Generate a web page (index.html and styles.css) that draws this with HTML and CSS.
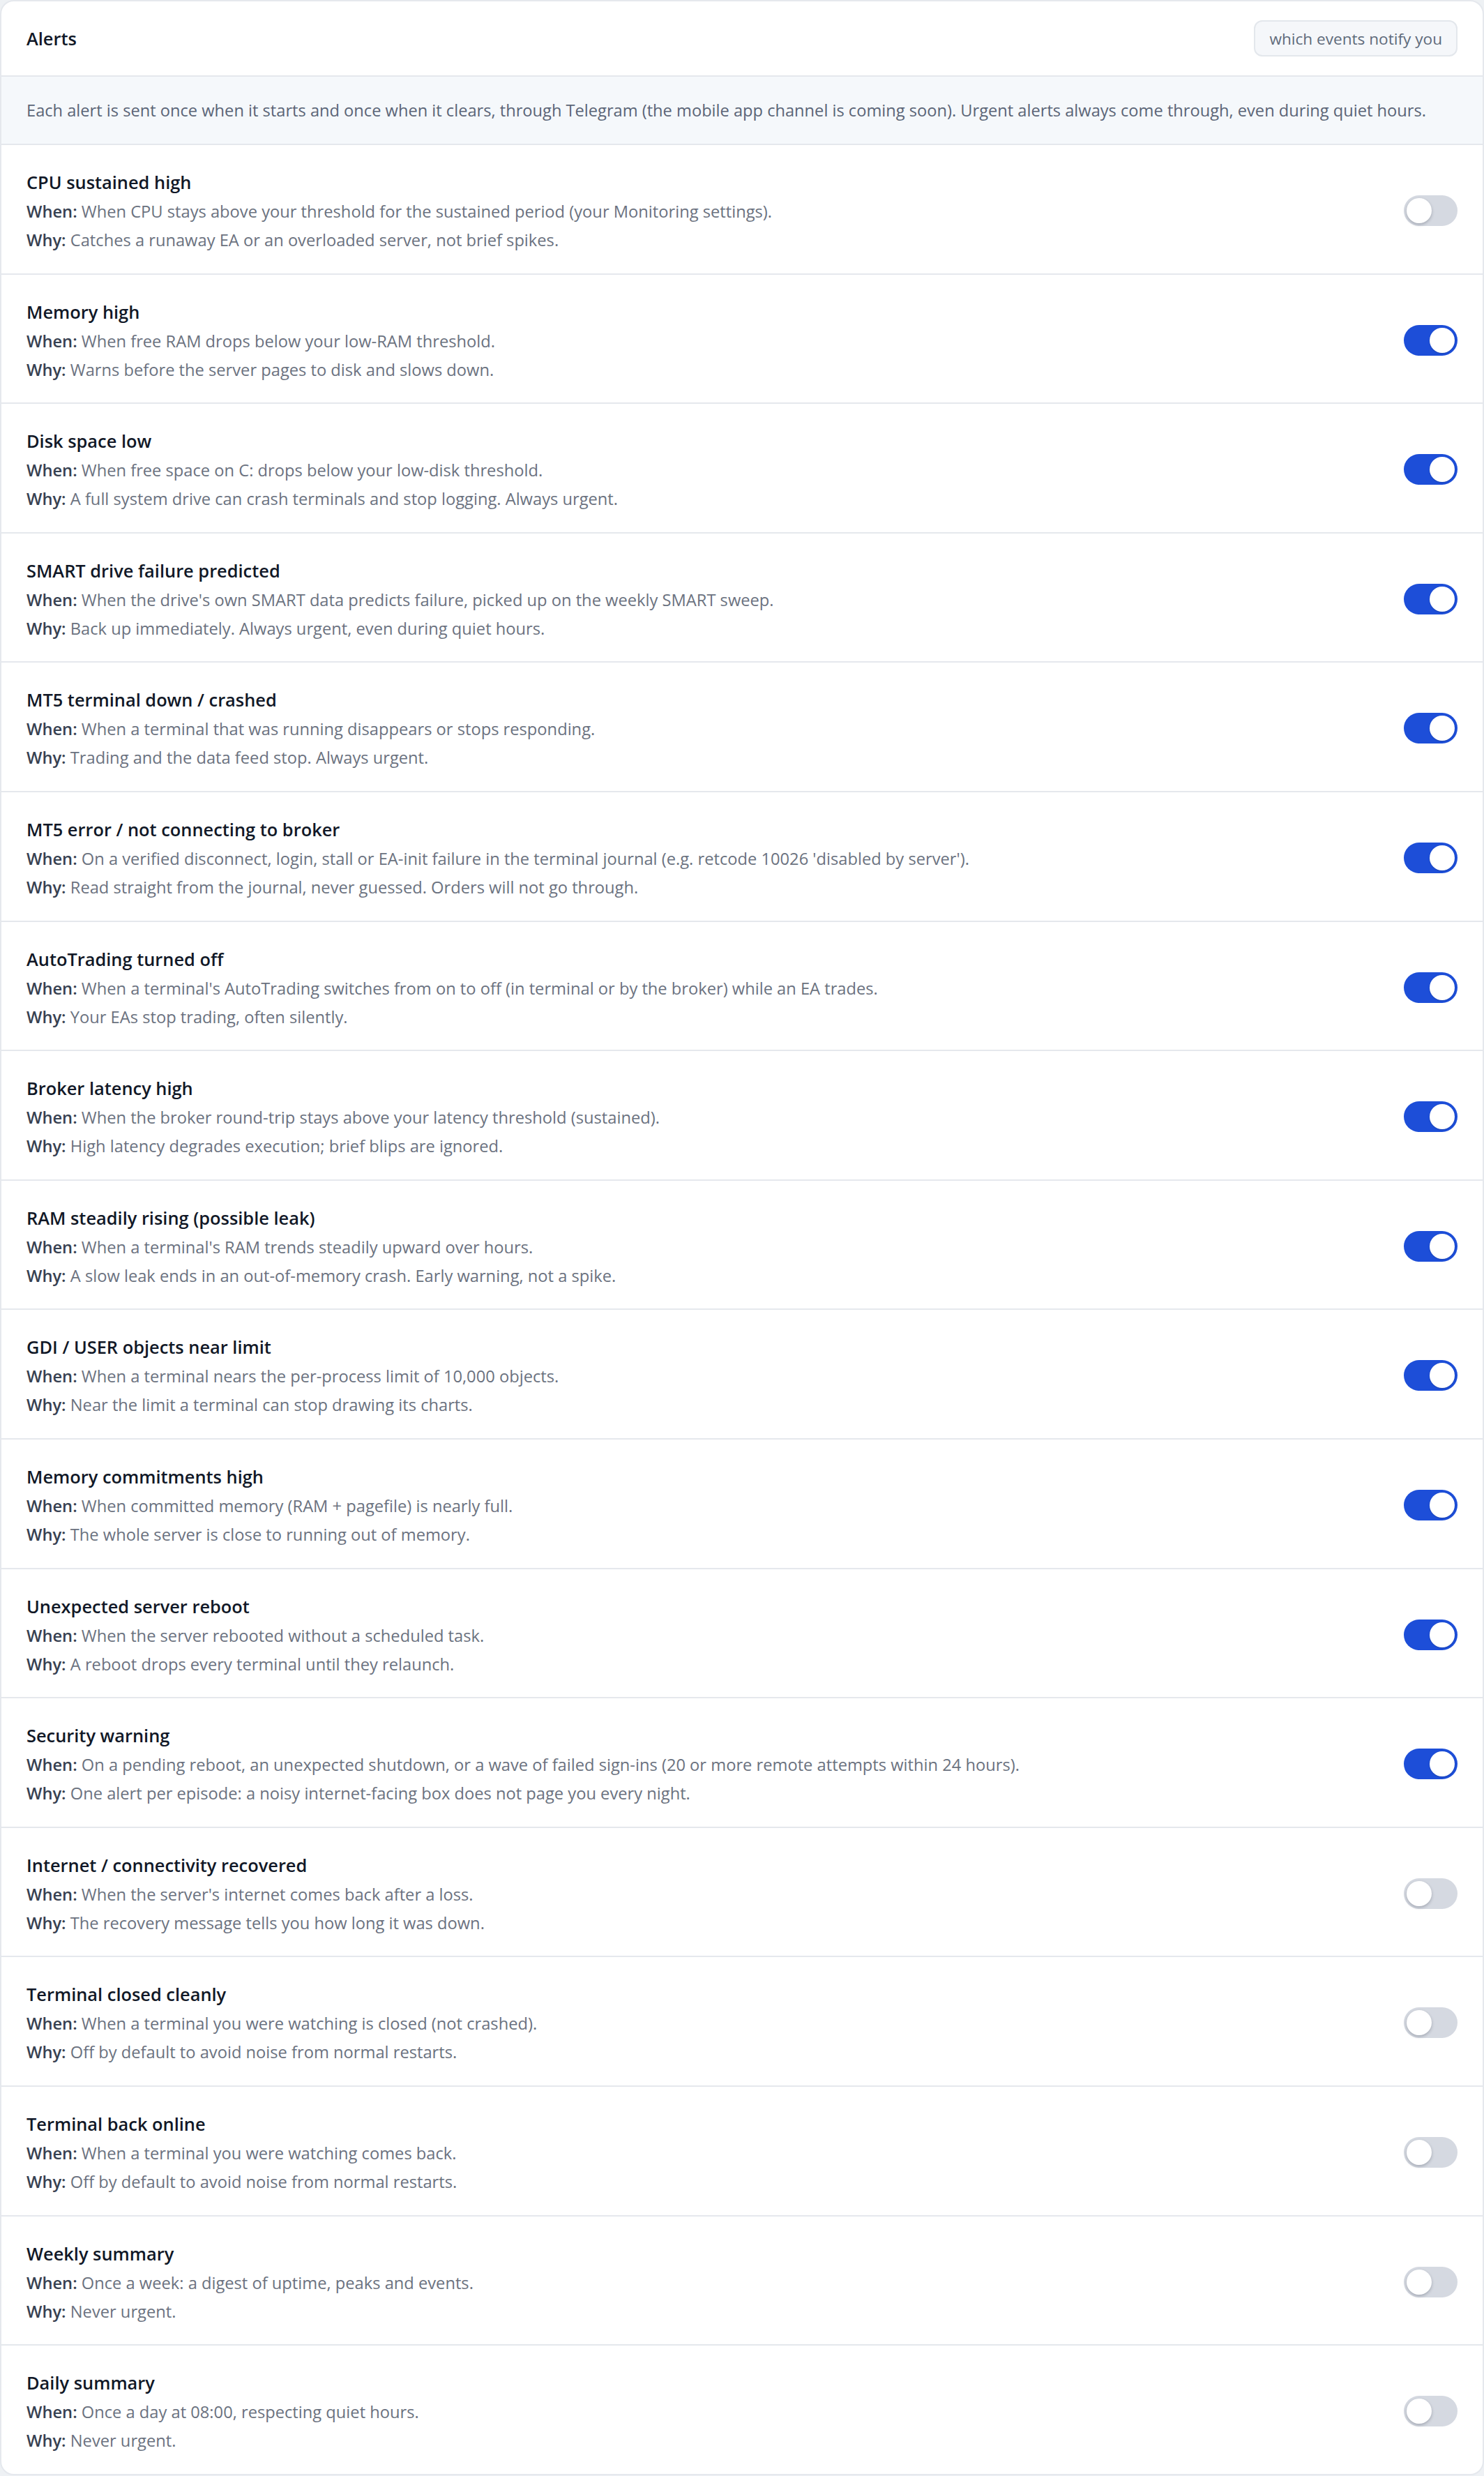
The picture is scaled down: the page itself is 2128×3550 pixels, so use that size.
FILE: index.html
```html
<!DOCTYPE html>
<html lang="en">
<head>
<meta charset="utf-8">
<title>Alerts</title>
<link rel="stylesheet" href="styles.css">
</head>
<body>
<section class="card">
  <header class="card-header">
    <h2 class="card-title">Alerts</h2>
    <span class="badge">which events notify you</span>
  </header>
  <p class="info">Each alert is sent once when it starts and once when it clears, through Telegram (the mobile app channel is coming soon). Urgent alerts always come through, even during quiet hours.</p>
  <ul class="alert-list">
    <li class="alert-row">
      <div class="alert-text">
        <h3 class="alert-name">CPU sustained high</h3>
        <p class="alert-line"><b>When:</b> When CPU stays above your threshold for the sustained period (your Monitoring settings).</p>
        <p class="alert-line"><b>Why:</b> Catches a runaway EA or an overloaded server, not brief spikes.</p>
      </div>
      <button class="switch" role="switch" aria-checked="false"><span class="knob"></span></button>
    </li>
    <li class="alert-row">
      <div class="alert-text">
        <h3 class="alert-name">Memory high</h3>
        <p class="alert-line"><b>When:</b> When free RAM drops below your low-RAM threshold.</p>
        <p class="alert-line"><b>Why:</b> Warns before the server pages to disk and slows down.</p>
      </div>
      <button class="switch is-on" role="switch" aria-checked="true"><span class="knob"></span></button>
    </li>
    <li class="alert-row">
      <div class="alert-text">
        <h3 class="alert-name">Disk space low</h3>
        <p class="alert-line"><b>When:</b> When free space on C: drops below your low-disk threshold.</p>
        <p class="alert-line"><b>Why:</b> A full system drive can crash terminals and stop logging. Always urgent.</p>
      </div>
      <button class="switch is-on" role="switch" aria-checked="true"><span class="knob"></span></button>
    </li>
    <li class="alert-row">
      <div class="alert-text">
        <h3 class="alert-name">SMART drive failure predicted</h3>
        <p class="alert-line"><b>When:</b> When the drive's own SMART data predicts failure, picked up on the weekly SMART sweep.</p>
        <p class="alert-line"><b>Why:</b> Back up immediately. Always urgent, even during quiet hours.</p>
      </div>
      <button class="switch is-on" role="switch" aria-checked="true"><span class="knob"></span></button>
    </li>
    <li class="alert-row">
      <div class="alert-text">
        <h3 class="alert-name">MT5 terminal down / crashed</h3>
        <p class="alert-line"><b>When:</b> When a terminal that was running disappears or stops responding.</p>
        <p class="alert-line"><b>Why:</b> Trading and the data feed stop. Always urgent.</p>
      </div>
      <button class="switch is-on" role="switch" aria-checked="true"><span class="knob"></span></button>
    </li>
    <li class="alert-row">
      <div class="alert-text">
        <h3 class="alert-name">MT5 error / not connecting to broker</h3>
        <p class="alert-line"><b>When:</b> On a verified disconnect, login, stall or EA-init failure in the terminal journal (e.g. retcode 10026 'disabled by server').</p>
        <p class="alert-line"><b>Why:</b> Read straight from the journal, never guessed. Orders will not go through.</p>
      </div>
      <button class="switch is-on" role="switch" aria-checked="true"><span class="knob"></span></button>
    </li>
    <li class="alert-row">
      <div class="alert-text">
        <h3 class="alert-name">AutoTrading turned off</h3>
        <p class="alert-line"><b>When:</b> When a terminal's AutoTrading switches from on to off (in terminal or by the broker) while an EA trades.</p>
        <p class="alert-line"><b>Why:</b> Your EAs stop trading, often silently.</p>
      </div>
      <button class="switch is-on" role="switch" aria-checked="true"><span class="knob"></span></button>
    </li>
    <li class="alert-row">
      <div class="alert-text">
        <h3 class="alert-name">Broker latency high</h3>
        <p class="alert-line"><b>When:</b> When the broker round-trip stays above your latency threshold (sustained).</p>
        <p class="alert-line"><b>Why:</b> High latency degrades execution; brief blips are ignored.</p>
      </div>
      <button class="switch is-on" role="switch" aria-checked="true"><span class="knob"></span></button>
    </li>
    <li class="alert-row">
      <div class="alert-text">
        <h3 class="alert-name">RAM steadily rising (possible leak)</h3>
        <p class="alert-line"><b>When:</b> When a terminal's RAM trends steadily upward over hours.</p>
        <p class="alert-line"><b>Why:</b> A slow leak ends in an out-of-memory crash. Early warning, not a spike.</p>
      </div>
      <button class="switch is-on" role="switch" aria-checked="true"><span class="knob"></span></button>
    </li>
    <li class="alert-row">
      <div class="alert-text">
        <h3 class="alert-name">GDI / USER objects near limit</h3>
        <p class="alert-line"><b>When:</b> When a terminal nears the per-process limit of 10,000 objects.</p>
        <p class="alert-line"><b>Why:</b> Near the limit a terminal can stop drawing its charts.</p>
      </div>
      <button class="switch is-on" role="switch" aria-checked="true"><span class="knob"></span></button>
    </li>
    <li class="alert-row">
      <div class="alert-text">
        <h3 class="alert-name">Memory commitments high</h3>
        <p class="alert-line"><b>When:</b> When committed memory (RAM + pagefile) is nearly full.</p>
        <p class="alert-line"><b>Why:</b> The whole server is close to running out of memory.</p>
      </div>
      <button class="switch is-on" role="switch" aria-checked="true"><span class="knob"></span></button>
    </li>
    <li class="alert-row">
      <div class="alert-text">
        <h3 class="alert-name">Unexpected server reboot</h3>
        <p class="alert-line"><b>When:</b> When the server rebooted without a scheduled task.</p>
        <p class="alert-line"><b>Why:</b> A reboot drops every terminal until they relaunch.</p>
      </div>
      <button class="switch is-on" role="switch" aria-checked="true"><span class="knob"></span></button>
    </li>
    <li class="alert-row">
      <div class="alert-text">
        <h3 class="alert-name">Security warning</h3>
        <p class="alert-line"><b>When:</b> On a pending reboot, an unexpected shutdown, or a wave of failed sign-ins (20 or more remote attempts within 24 hours).</p>
        <p class="alert-line"><b>Why:</b> One alert per episode: a noisy internet-facing box does not page you every night.</p>
      </div>
      <button class="switch is-on" role="switch" aria-checked="true"><span class="knob"></span></button>
    </li>
    <li class="alert-row">
      <div class="alert-text">
        <h3 class="alert-name">Internet / connectivity recovered</h3>
        <p class="alert-line"><b>When:</b> When the server's internet comes back after a loss.</p>
        <p class="alert-line"><b>Why:</b> The recovery message tells you how long it was down.</p>
      </div>
      <button class="switch" role="switch" aria-checked="false"><span class="knob"></span></button>
    </li>
    <li class="alert-row">
      <div class="alert-text">
        <h3 class="alert-name">Terminal closed cleanly</h3>
        <p class="alert-line"><b>When:</b> When a terminal you were watching is closed (not crashed).</p>
        <p class="alert-line"><b>Why:</b> Off by default to avoid noise from normal restarts.</p>
      </div>
      <button class="switch" role="switch" aria-checked="false"><span class="knob"></span></button>
    </li>
    <li class="alert-row">
      <div class="alert-text">
        <h3 class="alert-name">Terminal back online</h3>
        <p class="alert-line"><b>When:</b> When a terminal you were watching comes back.</p>
        <p class="alert-line"><b>Why:</b> Off by default to avoid noise from normal restarts.</p>
      </div>
      <button class="switch" role="switch" aria-checked="false"><span class="knob"></span></button>
    </li>
    <li class="alert-row">
      <div class="alert-text">
        <h3 class="alert-name">Weekly summary</h3>
        <p class="alert-line"><b>When:</b> Once a week: a digest of uptime, peaks and events.</p>
        <p class="alert-line"><b>Why:</b> Never urgent.</p>
      </div>
      <button class="switch" role="switch" aria-checked="false"><span class="knob"></span></button>
    </li>
    <li class="alert-row">
      <div class="alert-text">
        <h3 class="alert-name">Daily summary</h3>
        <p class="alert-line"><b>When:</b> Once a day at 08:00, respecting quiet hours.</p>
        <p class="alert-line"><b>Why:</b> Never urgent.</p>
      </div>
      <button class="switch" role="switch" aria-checked="false"><span class="knob"></span></button>
    </li>
  </ul>
</section>
</body>
</html>
```
FILE: styles.css
```css
* { box-sizing: border-box; }

html, body {
  margin: 0;
  padding: 0;
  background: #eef1f4;
}

body {
  font-family: "Open Sans", "Noto Sans", "Liberation Sans", sans-serif;
  color: #111827;
}

.card {
  background: #ffffff;
  border: 2px solid #e5e8ed;
  border-radius: 20px;
  overflow: hidden;
}

.card-header {
  height: 108px;
  display: flex;
  align-items: center;
  justify-content: space-between;
  padding: 0 36px;
  border-bottom: 2px solid #e5e8ed;
}

.card-title {
  margin: 0;
  font-size: 25.4px;
  font-weight: 600;
  line-height: 40px;
  color: #111827;
}

.badge {
  height: 52px;
  display: inline-flex;
  align-items: center;
  padding: 0 20px;
  border: 2px solid #e3e7ec;
  border-radius: 12px;
  background: #f5f7fa;
  color: #5f6b7b;
  font-size: 22.6px;
}

.info {
  margin: 0;
  height: 98px;
  display: flex;
  align-items: center;
  padding: 0 36px;
  background: #f5f8fb;
  border-bottom: 2px solid #e5e8ed;
  color: #5b6577;
  font-size: 23.65px;
  line-height: 40px;
}

.alert-list {
  list-style: none;
  margin: 0;
  padding: 0;
}

.alert-row {
  display: flex;
  align-items: center;
  justify-content: space-between;
  gap: 40px;
  padding: 31px 36px 26.6px;
  border-bottom: 2px solid #e5e8ed;
}

.alert-row:last-child {
  border-bottom: 0;
}

.alert-name {
  margin: 0;
  font-size: 25.4px;
  font-weight: 600;
  line-height: 44px;
  color: #111827;
}

.alert-line {
  margin: 0;
  font-size: 23.7px;
  line-height: 41px;
  color: #6b7280;
}

.alert-line b {
  font-weight: 600;
  color: #374151;
}

.switch {
  flex: none;
  width: 77px;
  height: 44px;
  padding: 4px;
  border: 0;
  border-radius: 22px;
  background: #d5d9e1;
  display: flex;
  justify-content: flex-start;
  align-items: center;
  cursor: pointer;
}

.switch.is-on {
  background: #1d4ed8;
  justify-content: flex-end;
}

.knob {
  width: 36px;
  height: 36px;
  border-radius: 50%;
  background: #ffffff;
  box-shadow: 0 2px 4px rgba(15, 23, 42, 0.25);
}

.switch.is-on .knob {
  box-shadow: 0 1px 2px rgba(15, 23, 42, 0.2);
}
```
